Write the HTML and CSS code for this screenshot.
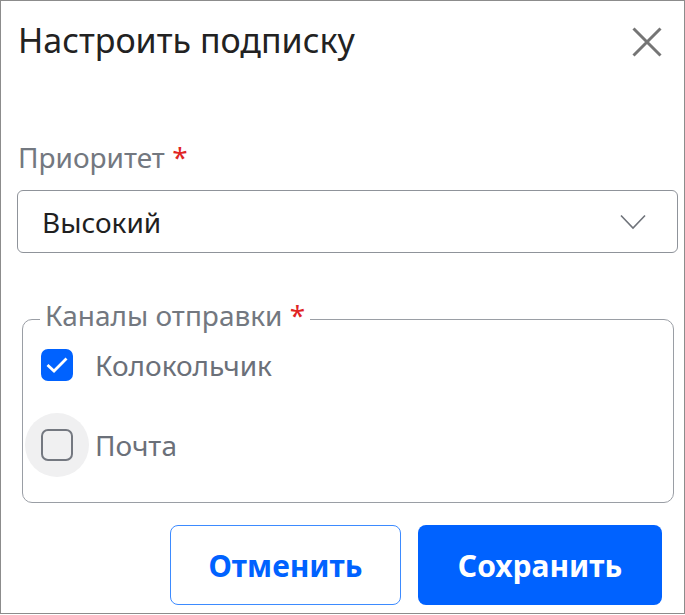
FILE: index.html
```html
<!DOCTYPE html>
<html lang="ru">
<head>
    <meta charset="UTF-8">
    <meta name="viewport" content="width=device-width, initial-scale=1.0">
    <title>Настроить подписку</title>
    <link rel="stylesheet" href="styles.css">
</head>
<body>
    <div class="dialog">
        <div class="dialog-header">
            <h2 class="dialog-title">Настроить подписку</h2>
            <button class="close-btn" aria-label="Закрыть">
                <svg width="30" height="30" viewBox="0 0 30 30">
                    <path d="M1.5 1.5 L28.5 28.5 M28.5 1.5 L1.5 28.5" stroke="#757575" stroke-width="3" fill="none"/>
                </svg>
            </button>
        </div>

        <div class="dialog-body">
            <div class="field">
                <label class="field-label">Приоритет <span class="required">*</span></label>
                <div class="select">
                    <span class="select-value">Высокий</span>
                    <svg class="chevron" width="26" height="16" viewBox="0 0 26 16">
                        <path d="M1 1.5 L13 14 L25 1.5" stroke="#6f737a" stroke-width="1.6" fill="none"/>
                    </svg>
                </div>
            </div>

            <fieldset class="channels">
                <legend>Каналы отправки <span class="required">*</span></legend>
                <div class="check-row">
                    <span class="check-wrap">
                        <span class="checkbox checked">
                            <svg width="24" height="20" viewBox="0 0 24 20">
                                <path d="M2.5 10 L9 16 L21.5 3.5" stroke="#fff" stroke-width="2.8" fill="none"/>
                            </svg>
                        </span>
                    </span>
                    <span class="check-label">Колокольчик</span>
                </div>
                <div class="check-row">
                    <span class="check-wrap hovered">
                        <span class="checkbox"></span>
                    </span>
                    <span class="check-label">Почта</span>
                </div>
            </fieldset>
        </div>

        <div class="dialog-footer">
            <button class="btn btn-outline">Отменить</button>
            <button class="btn btn-primary">Сохранить</button>
        </div>
    </div>
</body>
</html>
```

FILE: styles.css
```css
* {
    margin: 0;
    padding: 0;
    box-sizing: border-box;
}

body {
    font-family: 'Noto Sans', 'Open Sans', sans-serif;
    background: #fff;
}

.dialog {
    width: 685px;
    height: 614px;
    border: 1px solid #8c8c8c;
    background: #fff;
}

.dialog-header {
    display: flex;
    justify-content: space-between;
    align-items: center;
    height: 78px;
    padding: 0 22px 0 17px;
}

.dialog-title {
    font-size: 34px;
    font-weight: 400;
    color: #222;
}

.close-btn {
    background: none;
    border: none;
    width: 30px;
    height: 30px;
    margin-top: 4px;
    display: flex;
    cursor: pointer;
}

.dialog-body {
    padding: 59px 6px 0 16px;
}

.field-label {
    display: block;
    font-size: 28px;
    color: #737880;
    line-height: 38px;
    margin-left: 1px;
}

.required {
    color: #e02424;
}

.select {
    margin-top: 14px;
    height: 63px;
    border: 1px solid #8f939a;
    border-radius: 6px;
    display: flex;
    align-items: center;
    justify-content: space-between;
    padding: 0 31px 0 24px;
}

.select-value {
    font-size: 28px;
    color: #1f1f1f;
}

.channels {
    margin: 48px 4px 0 5px;
    border: 1px solid #9a9ea5;
    border-radius: 10px;
    padding: 0 0 25px 2px;
}

.channels legend {
    font-size: 28px;
    color: #737880;
    line-height: 28px;
    padding: 0 5px 8px 5px;
    margin-left: 15px;
}

.check-row {
    display: flex;
    align-items: center;
    height: 64px;
}

.check-row:first-of-type {
    margin-top: -4px;
    margin-bottom: 16px;
}

.check-wrap {
    width: 64px;
    height: 64px;
    border-radius: 50%;
    display: flex;
    align-items: center;
    justify-content: center;
}

.check-wrap.hovered {
    background: #f0f0f1;
}

.checkbox {
    width: 32px;
    height: 32px;
    border: 2px solid #747880;
    border-radius: 7px;
    display: flex;
    align-items: center;
    justify-content: center;
}

.checkbox.checked {
    background: #0062ff;
    border-color: #0062ff;
}

.check-label {
    font-size: 28px;
    color: #6b7079;
    margin-left: 6px;
}

.dialog-footer {
    display: flex;
    justify-content: flex-end;
    gap: 17px;
    padding: 22px 22px 0 0;
}

.btn {
    height: 80px;
    border-radius: 8px;
    font-family: 'Noto Sans', sans-serif;
    font-size: 30px;
    font-weight: 700;
    cursor: pointer;
}

.btn-outline {
    width: 231px;
    background: #fff;
    border: 1px solid #3d8bff;
    color: #0062ff;
}

.btn-primary {
    width: 244px;
    background: #0062ff;
    border: none;
    color: #fff;
}
```
